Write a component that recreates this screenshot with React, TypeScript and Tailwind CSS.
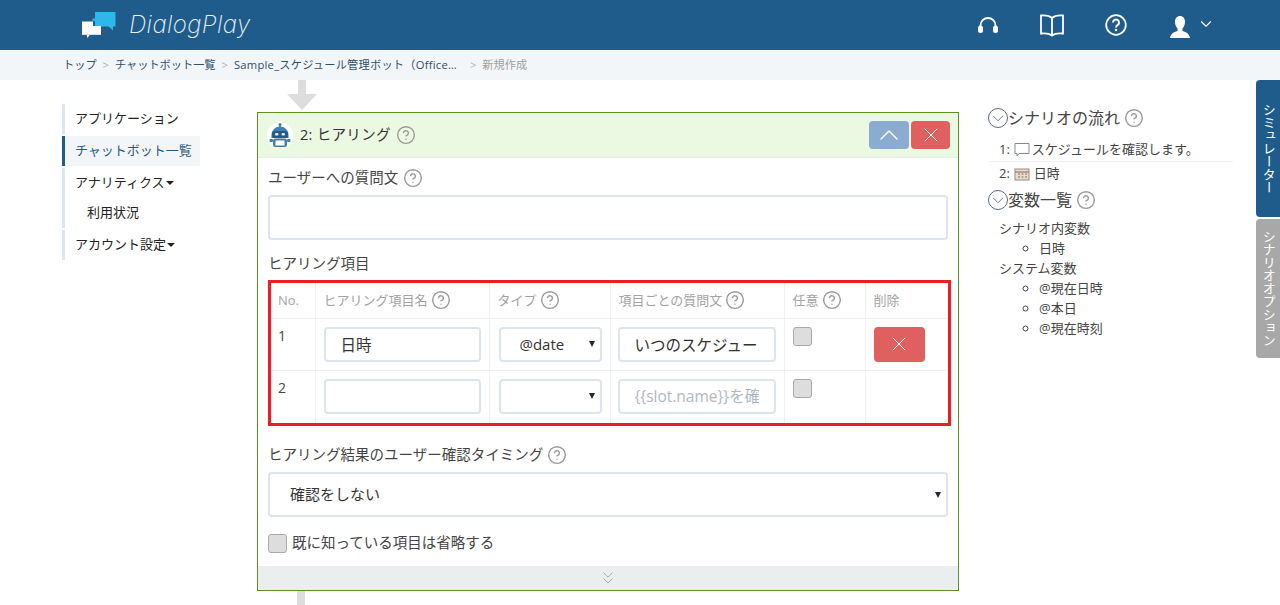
import { ChevronDown, ChevronUp, ChevronsDown, CircleHelp, X } from "lucide-react";

const FONT = "[font-family:'Open_Sans','Noto_Sans_CJK_JP',sans-serif]";

function Help() {
  return <CircleHelp size={20} strokeWidth={1.7} className="inline-block shrink-0 text-[#9a9a9a]" />;
}

function Check() {
  return <input type="checkbox" readOnly className="block h-[19px] w-[19px] appearance-none rounded-[3px] border border-[#aaaaaa] bg-[#dddddd]" />;
}

function Caret() {
  return <span className="absolute right-[7px] top-1/2 h-0 w-0 -translate-y-1/2 border-x-[3px] border-t-[6px] border-x-transparent border-t-[#1a2a3a]" />;
}

function Toggle() {
  return (
    <span className="flex h-[20px] w-[20px] shrink-0 items-center justify-center rounded-full border border-[#5a6a7a]">
      <ChevronDown size={19} strokeWidth={1} className="text-[#44546a]" />
    </span>
  );
}

function Robot() {
  return (
    <svg width="26" height="26" viewBox="0 0 26 26" className="shrink-0">
      <circle cx="13" cy="13" r="13" fill="#ffffff" />
      <circle cx="13" cy="2.500" r="1.500" fill="#3f7fb5" />
      <rect x="12.300" y="2.500" width="1.400" height="3" fill="#3f7fb5" />
      <path d="M4.500 13a8.500 8.500 0 0 1 17 0v3h-17z" fill="#3f7fb5" />
      <rect x="5" y="9" width="16" height="7" rx="2.500" fill="#1f5c8b" />
      <rect x="8" y="11" width="3.500" height="2.500" rx="1" fill="#dfeaf3" />
      <rect x="14.500" y="11" width="3.500" height="2.500" rx="1" fill="#dfeaf3" />
      <rect x="6" y="16.500" width="14" height="8.500" rx="2.500" fill="#3f7fb5" />
      <rect x="8.500" y="18.500" width="9" height="5" fill="#ffffff" />
      <rect x="2.500" y="17" width="3.500" height="3" rx="1" fill="#3f7fb5" />
      <rect x="20" y="17" width="3.500" height="3" rx="1" fill="#3f7fb5" />
    </svg>
  );
}

function Logo() {
  return (
    <svg width="34" height="26" viewBox="0 0 34 26" className="shrink-0">
      <path d="M13 0h20.500v14.500H31v4l-4.500-4H13V9h-2.500V6.500H13z" fill="#2fb6ea" />
      <path d="M0 9.500h11V14h8v8.500H8L5.500 26 4.500 22.500H0z" fill="#ffffff" />
      <path d="M0 22h19v1H0z" fill="#d5dde3" />
    </svg>
  );
}

function HeaderIcons() {
  return (
    <div className="ml-auto flex items-center">
      <svg width="20" height="16" viewBox="0 0 20 16" fill="none" stroke="#ffffff" strokeWidth="1.800" className="mr-[42px]">
        <path d="M2.500 12V8.500a7.500 7.500 0 0 1 15 0V12" />
        <rect x="0" y="8.500" width="5" height="7.500" rx="2.500" fill="#ffffff" stroke="none" />
        <rect x="15" y="8.500" width="5" height="7.500" rx="2.500" fill="#ffffff" stroke="none" />
      </svg>
      <svg width="24" height="23" viewBox="0 0 24 23" fill="none" stroke="#ffffff" strokeWidth="1.800" className="mr-[41px]">
        <path d="M12 4C9.500 1.800 5.500 1 1 1.500V19.500C5.500 19 9.500 19.500 12 21.500 14.500 19.500 18.500 19 23 19.500V1.500C18.500 1 14.500 1.800 12 4zM12 4V21.500" />
      </svg>
      <svg width="22" height="22" viewBox="0 0 22 22" fill="none" stroke="#ffffff" strokeWidth="1.800" className="mr-[43px]">
        <circle cx="11" cy="11" r="9.800" />
        <path d="M8 8.500a3 3 0 1 1 4.500 2.600c-1 .6-1.500 1.200-1.500 2.400" strokeWidth="2" />
        <circle cx="11" cy="16" r="1.200" fill="#ffffff" stroke="none" />
      </svg>
      <svg width="20" height="22" viewBox="0 0 22 23" preserveAspectRatio="none" fill="#ffffff" className="mr-[7px] mt-[3px]">
        <path d="M11 0c3.300 0 5.500 2.500 5.500 6 0 3-1.200 5.500-2.800 7v2.500c2.800 1.200 7.300 2.200 8.300 7.500H0c1-5.300 5.500-6.300 8.300-7.500V13C6.700 11.500 5.500 9 5.500 6 5.500 2.500 7.700 0 11 0z" />
      </svg>
      <ChevronDown size={18} strokeWidth={1.500} className="mb-[2px] mr-[65px] text-white" />
    </div>
  );
}

function SideNav() {
  return (
    <nav className="ml-[62px] mt-[24px] flex w-[138px] shrink-0 flex-col gap-[2px] text-[13px] text-[#222222]">
      <div className="flex h-[30px] items-center border-l-[3px] border-[#dce5f0] pl-[10px]">アプリケーション</div>
      <div className="flex h-[30px] items-center border-l-[3px] border-[#1f5c8b] bg-[#f3f6f9] pl-[10px] text-[#2a5a80]">チャットボット一覧</div>
      <div className="border-l-[3px] border-[#dce5f0]">
        <div className="flex h-[30px] items-center pl-[10px]">
          アナリティクス
          <span className="ml-px h-0 w-0 border-x-[4px] border-t-[4px] border-x-transparent border-t-[#222222]" />
        </div>
        <div className="flex h-[30px] items-center pl-[22px]">利用状況</div>
      </div>
      <div className="flex h-[30px] items-center border-l-[3px] border-[#dce5f0] pl-[10px]">
        アカウント設定
        <span className="ml-px h-0 w-0 border-x-[4px] border-t-[4px] border-x-transparent border-t-[#222222]" />
      </div>
    </nav>
  );
}

const th = "border-r border-[#eef1f4] px-[8px] text-left align-middle text-[13px] font-normal text-[#a3a3a3]";
const td = "border-r border-t border-[#eef1f4] px-[8px] pt-[8px] align-top";
const field = "block h-[35px] w-full rounded-[4px] border-2 border-[#dce5ee] bg-white px-[15px] text-[15.500px] text-[#333333] outline-none placeholder:text-[#b0b8c0]";

function SlotTable() {
  return (
    <div className="border-[3px] border-[#ee1c25]">
      <table className="w-full table-fixed border-collapse">
        <colgroup>
          <col className="w-[44px]" />
          <col className="w-[174px]" />
          <col className="w-[121px]" />
          <col className="w-[174px]" />
          <col className="w-[81px]" />
          <col />
        </colgroup>
        <thead>
          <tr className="h-[35px]">
            <th className={th + " pl-[7px]"}>No.</th>
            <th className={th}>
              <span className="flex items-center gap-[3px]">ヒアリング項目名 <Help /></span>
            </th>
            <th className={th}>
              <span className="flex items-center gap-[3px]">タイプ <Help /></span>
            </th>
            <th className={th}>
              <span className="flex items-center gap-[3px]">項目ごとの質問文 <Help /></span>
            </th>
            <th className={th}>
              <span className="flex items-center gap-[3px]">任意 <Help /></span>
            </th>
            <th className={th + " border-r-0"}>削除</th>
          </tr>
        </thead>
        <tbody className="text-[14px] text-[#444444]">
          <tr className="h-[52px]">
            <td className={td + " pl-[7px] !pt-[7px] leading-[20px]"}>1</td>
            <td className={td}>
              <input className={field} readOnly value="日時" />
            </td>
            <td className={td}>
              <div className="relative ml-px">
                <select className={field + " appearance-none pl-[19px] !text-[15px]"} defaultValue="@date">
                  <option>@date</option>
                </select>
                <Caret />
              </div>
            </td>
            <td className={td + " !pl-[7px]"}>
              <input className={field} readOnly value="いつのスケジュールを確認しますか？" />
            </td>
            <td className={td}>
              <Check />
            </td>
            <td className={td + " border-r-0"}>
              <button className="flex h-[35px] w-[51px] items-center justify-center rounded-[4px] bg-[#e06060] text-white">
                <X size={24} strokeWidth={1} />
              </button>
            </td>
          </tr>
          <tr className="h-[53px]">
            <td className={td + " pl-[7px] !pt-[7px] leading-[20px]"}>2</td>
            <td className={td}>
              <input className={field} readOnly />
            </td>
            <td className={td}>
              <div className="relative ml-px">
                <select className={field + " appearance-none"}>
                  <option></option>
                </select>
                <Caret />
              </div>
            </td>
            <td className={td + " !pl-[7px]"}>
              <input className={field} readOnly placeholder="{{slot.name}}を確認します" />
            </td>
            <td className={td}>
              <Check />
            </td>
            <td className={td + " border-r-0"}></td>
          </tr>
        </tbody>
      </table>
    </div>
  );
}

function Arrow() {
  return (
    <div className="ml-[29px] flex w-[31px] flex-col items-center">
      <div className="h-[14px] w-[8px] bg-[#dddddd]" />
      <div className="h-0 w-0 border-x-[15.500px] border-t-[16px] border-x-transparent border-t-[#dddddd]" />
    </div>
  );
}

function Card() {
  return (
    <div className="mt-[2px] w-[702px] border border-[#5b9120] bg-white">
      <div className="flex h-[44px] items-center bg-[#ebf8e2] pl-[9px] pr-[8px]">
        <Robot />
        <span className="ml-[7px] text-[14.500px] tracking-[0.3px] text-[#333333]">2: ヒアリング</span>
        <span className="ml-[5px] flex"><Help /></span>
        <div className="ml-auto flex gap-[2px]">
          <button className="flex h-[28px] w-[40px] items-center justify-center rounded-[4px] bg-[#8aacd0] text-white">
            <ChevronUp size={32} strokeWidth={1} />
          </button>
          <button className="flex h-[28px] w-[39px] items-center justify-center rounded-[4px] bg-[#e06060] text-white">
            <X size={24} strokeWidth={1} />
          </button>
        </div>
      </div>
      <div className="border-t border-[#e8eef0] px-[10px] pb-[13px] text-[14.500px] text-[#444444]">
        <div className="mt-[10px] flex h-[20px] items-center gap-[5px]">ユーザーへの質問文 <Help /></div>
        <input readOnly className="mt-[7px] block h-[45px] w-[680px] rounded-[4px] border-2 border-[#dce5ee] bg-white" />
        <div className="mt-[14px] h-[20px] leading-[20px]">ヒアリング項目</div>
        <div className="mt-[6px] w-[683px]">
          <SlotTable />
        </div>
        <div className="mt-[19px] flex h-[20px] items-center gap-[4px]">ヒアリング結果のユーザー確認タイミング <Help /></div>
        <div className="relative mt-[7px] w-[680px]">
          <select className="block h-[45px] w-full appearance-none rounded-[4px] border-2 border-[#dce5ee] bg-white px-[20px] text-[15px] text-[#333333]">
            <option>確認をしない</option>
          </select>
          <Caret />
        </div>
        <div className="mt-[16px] flex h-[20px] items-center gap-[5px]">
          <Check />
          既に知っている項目は省略する
        </div>
      </div>
      <div className="flex h-[24px] items-center justify-center bg-[#ebeeef]">
        <ChevronsDown size={20} strokeWidth={1} className="text-[#9a9a9a]" />
      </div>
    </div>
  );
}

function SidePanel() {
  return (
    <aside className="ml-[29px] mt-[26px] w-[245px] shrink-0 text-[13px] text-[#444444]">
      <div className="flex h-[24px] items-center text-[16px]">
        <Toggle />
        シナリオの流れ
        <span className="ml-[4px] flex"><Help /></span>
      </div>
      <div className="ml-px mt-[8px] w-[244px]">
        <div className="flex h-[24px] items-center border-b border-[#eef0f2] pl-[10px]">
          1:
          <svg width="16" height="15" viewBox="0 0 16 15" fill="none" stroke="#7a8a9a" className="ml-[4px] mr-[2px]">
            <path d="M1 1.500h14v10H5l-2 2.500v-2.500H1z" />
          </svg>
          スケジュールを確認します。
        </div>
        <div className="flex h-[24px] items-center pl-[10px]">
          2:
          <svg width="16" height="13" viewBox="0 0 16 13" className="mx-[4px]">
            <rect x="1" y="1" width="14" height="11" fill="#e6dcd0" stroke="#a08a7a" />
            <path d="M1 4h14M4 6h2M7.500 6h2M11 6h2M4 9h2M7.500 9h2M11 9h2" stroke="#8a6a5a" />
          </svg>
          日時
        </div>
      </div>
      <div className="mt-[2px] flex h-[24px] items-center text-[16px]">
        <Toggle />
        変数一覧
        <span className="ml-[4px] flex"><Help /></span>
      </div>
      <div className="mt-[6px] pl-[11px] leading-[20px]">
        <div>シナリオ内変数</div>
        <ul className="list-[circle] pl-[40px]">
          <li>日時</li>
        </ul>
        <div>システム変数</div>
        <ul className="list-[circle] pl-[40px]">
          <li>@現在日時</li>
          <li>@本日</li>
          <li>@現在時刻</li>
        </ul>
      </div>
    </aside>
  );
}

function SideTabs() {
  return (
    <div className="ml-auto flex w-[24px] shrink-0 flex-col gap-[2px] text-[13px] text-white">
      <div className="flex h-[137px] items-center justify-center rounded-bl-[4px] rounded-tl-[4px] bg-[#1f5c8b] [writing-mode:vertical-rl]">シミュレーター</div>
      <div className="flex h-[139px] items-center justify-center rounded-bl-[4px] rounded-tl-[4px] bg-[#a8a8a8] [writing-mode:vertical-rl]">シナリオオプション</div>
    </div>
  );
}

export default function App() {
  return (
    <div className={"h-[605px] w-[1280px] overflow-hidden bg-white " + FONT}>
      <header className="flex h-[50px] items-center bg-[#1f5c8b] pl-[82px]">
        <Logo />
        <span className="ml-[13px] text-[24px] font-extralight italic tracking-[0.4px] text-[#e8f2f8] [font-family:Inter,sans-serif]">DialogPlay</span>
        <HeaderIcons />
      </header>
      <div className="flex h-[30px] items-center bg-[#f3f6f9] pl-[63px] text-[11.200px] text-[#2f4f6a]">
        <span>トップ</span>
        <span className="mx-[6px] text-[#b0b0b0]">&gt;</span>
        <span>チャットボット一覧</span>
        <span className="mx-[6px] text-[#b0b0b0]">&gt;</span>
        <span className="tracking-[0.25px]">Sample_スケジュール管理ボット（Office…</span>
        <span className="ml-[13px] mr-[6px] text-[#b0b0b0]">&gt;</span>
        <span className="text-[#a0a0a0]">新規作成</span>
      </div>
      <div className="flex">
        <SideNav />
        <main className="ml-[57px] w-[702px] shrink-0">
          <Arrow />
          <Card />
          <div className="ml-[40px] h-[14px] w-[8px] bg-[#dddddd]" />
        </main>
        <SidePanel />
        <SideTabs />
      </div>
    </div>
  );
}
